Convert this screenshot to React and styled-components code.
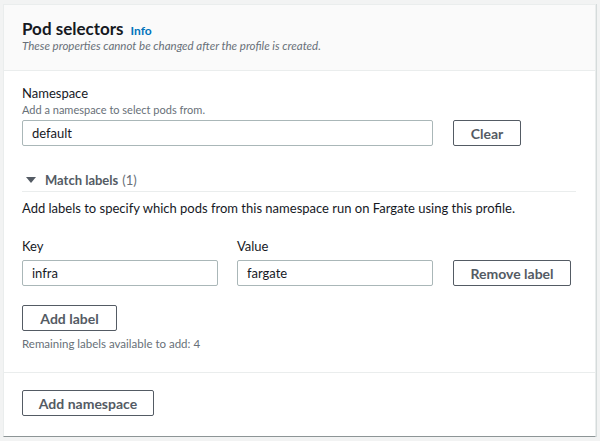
import React from "react";
import styled, { createGlobalStyle } from "styled-components";

const Global = createGlobalStyle`
  html, body { margin: 0; padding: 0; background: #f2f3f3; }
  body { font-family: Lato, "Liberation Sans", sans-serif; color: #16191f; }
  * { box-sizing: border-box; }
`;

const Page = styled.div`
  padding: 4px 4px 4px 3px;
  width: 600px;
  height: 441px;
`;

const Card = styled.section`
  background: #fff;
  width: 593px;
  height: 433px;
  border: 1px solid #eaeded;
  border-bottom: 1px solid #8d9596;
  box-shadow: 1px 0 0 #d5dbdb;
  display: flex;
  flex-direction: column;
`;

const Header = styled.header`
  background: #fafafa;
  border-bottom: 1px solid #eaeded;
  padding: 14px 18px 17px;
`;

const TitleRow = styled.div`
  display: flex;
  align-items: baseline;
  gap: 7px;
`;

const Title = styled.h2`
  margin: 0;
  font-size: 17px;
  line-height: 19px;
  font-weight: 700;
  color: #16191f;
`;

const InfoLink = styled.a`
  font-size: 12px;
  font-weight: 700;
  color: #0073bb;
  text-decoration: none;
`;

const HeaderDesc = styled.p`
  margin: 0;
  font-size: 11.5px;
  line-height: 15px;
  font-style: italic;
  color: #687078;
`;

const Body = styled.div`
  padding: 14px 18px 21px;
  border-bottom: 1px solid #eaeded;
`;

const Label = styled.div`
  font-size: 13px;
  line-height: 17px;
  color: #16191f;
`;

const Desc = styled.div`
  font-size: 11px;
  line-height: 15px;
  color: #687078;
  margin-bottom: ${(p) => p.$mb || 0}px;
`;

const Row = styled.div`
  display: flex;
  align-items: flex-end;
`;

const Field = styled.div`
  display: flex;
  flex-direction: column;
  width: ${(p) => p.$w}px;
  margin-right: ${(p) => p.$mr || 0}px;
`;

const Input = styled.input`
  height: 26px;
  width: 100%;
  border: 1px solid #aab7b8;
  border-radius: 2px;
  padding: 0 9px;
  font-family: inherit;
  font-size: 13px;
  color: #16191f;
  background: #fff;
  outline: none;
`;

const Button = styled.button`
  height: 26px;
  width: ${(p) => p.$w}px;
  border: 1px solid #545b64;
  border-radius: 2px;
  background: #fff;
  color: #545b64;
  font-family: inherit;
  font-size: 14px;
  font-weight: 700;
  padding: 0;
  cursor: pointer;
`;

const Expander = styled.div`
  margin-top: 24px;
  display: flex;
  align-items: center;
  height: 22px;
  padding: 0 0 1px 4px;
  border-bottom: 1px solid #eaeded;
  width: 554px;
`;

const Caret = styled.svg`
  width: 10px;
  height: 6px;
  margin-right: 9px;
`;

const ExpTitle = styled.span`
  font-size: 13px;
  font-weight: 700;
  color: #545b64;
`;

const ExpCount = styled.span`
  font-size: 13px;
  color: #687078;
  margin-left: 4px;
`;

const Para = styled.p`
  margin: 6px 0 20px;
  font-size: 13px;
  line-height: 20px;
  color: #16191f;
`;

const FieldLabel = styled(Label)`
  margin-bottom: 5px;
`;

const AddWrap = styled.div`
  margin-top: 19px;
`;

const Remaining = styled.div`
  margin-top: 5px;
  font-size: 11.5px;
  line-height: 15px;
  color: #687078;
`;

const Footer = styled.div`
  padding: 17px 18px 19px;
`;

export default function App() {
  return (
    <Page>
      <Global />
      <Card>
        <Header>
          <TitleRow>
            <Title>Pod selectors</Title>
            <InfoLink href="#">Info</InfoLink>
          </TitleRow>
          <HeaderDesc>These properties cannot be changed after the profile is created.</HeaderDesc>
        </Header>
        <Body>
          <Label>Namespace</Label>
          <Desc $mb={3}>Add a namespace to select pods from.</Desc>
          <Row>
            <Field $w={411} $mr={20}>
              <Input defaultValue="default" />
            </Field>
            <Button $w={68}>Clear</Button>
          </Row>
          <Expander>
            <Caret viewBox="0 0 10 6">
              <path d="M0 0 L10 0 L5 6 Z" fill="#545b64" />
            </Caret>
            <ExpTitle>Match labels</ExpTitle>
            <ExpCount>(1)</ExpCount>
          </Expander>
          <Para>Add labels to specify which pods from this namespace run on Fargate using this profile.</Para>
          <Row>
            <Field $w={196} $mr={19}>
              <FieldLabel>Key</FieldLabel>
              <Input defaultValue="infra" />
            </Field>
            <Field $w={196} $mr={20}>
              <FieldLabel>Value</FieldLabel>
              <Input defaultValue="fargate" />
            </Field>
            <Button $w={118}>Remove label</Button>
          </Row>
          <AddWrap>
            <Button $w={95}>Add label</Button>
          </AddWrap>
          <Remaining>Remaining labels available to add: 4</Remaining>
        </Body>
        <Footer>
          <Button $w={132}>Add namespace</Button>
        </Footer>
      </Card>
    </Page>
  );
}
